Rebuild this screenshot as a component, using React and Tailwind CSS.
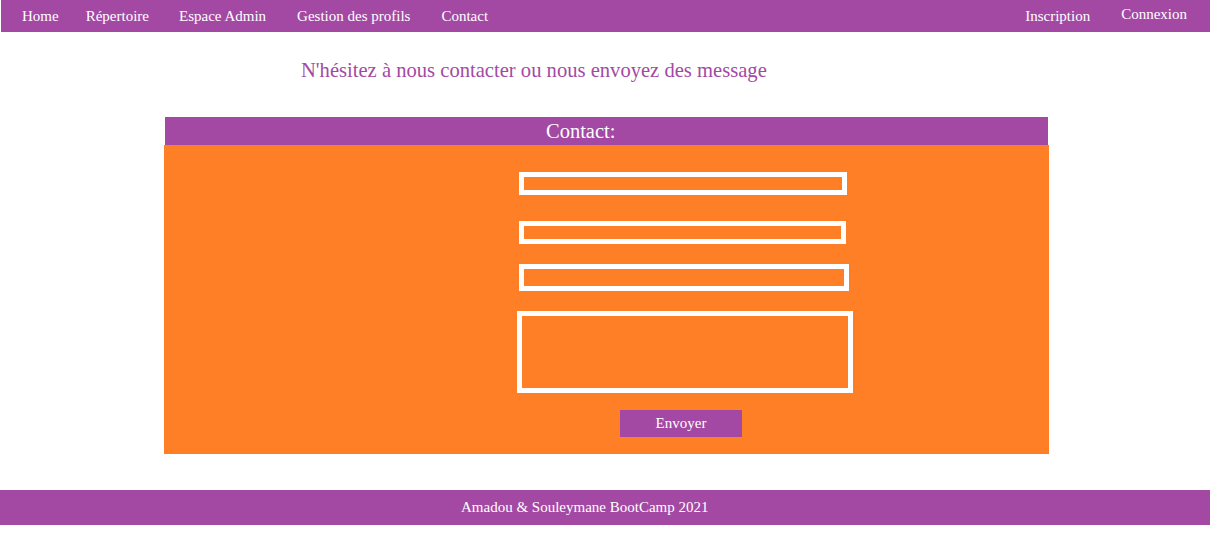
import React from 'react';

const navLeft = [
  { label: 'Home', cls: 'ml-[21px]' },
  { label: 'Répertoire', cls: 'ml-[27px]' },
  { label: 'Espace Admin', cls: 'ml-[30px]' },
  { label: 'Gestion des profils', cls: 'ml-[31px]' },
  { label: 'Contact', cls: 'ml-[31px]' },
];

const App = () => {
  return (
    <div className="min-h-[554px] bg-white font-['Liberation_Serif',serif] text-white">
      {/* Top navigation */}
      <nav className="ml-px h-[32px] bg-[#a349a4] flex items-center justify-between text-[15px]">
        <ul className="flex items-center">
          {navLeft.map(item => (
            <li key={item.label} className={item.cls}>{item.label}</li>
          ))}
        </ul>
        <ul className="flex items-center">
          <li>Inscription</li>
          <li className="ml-[31px] mr-[23px] mb-[3px]">Connexion</li>
        </ul>
      </nav>

      {/* Intro */}
      <h1 className="mt-[24px] ml-[301px] text-[20.6px] leading-[28px] text-[#a349a4]">
        N'hésitez à nous contacter ou nous envoyez des message
      </h1>

      {/* Contact panel */}
      <section className="mt-[33px] ml-[164px] w-[885px]">
        <div className="mx-px h-[28px] bg-[#a349a4] pl-[381px] text-[20.5px] leading-[28px]">
          Contact:
        </div>
        <form className="h-[309px] bg-[#ff7f27] pl-[355px] pt-[27px] flex flex-col items-start">
          <input className="w-[328px] h-[23px] border-[5px] border-white bg-transparent outline-none" />
          <input className="mt-[26px] w-[327px] h-[23px] border-[5px] border-white bg-transparent outline-none" />
          <input className="mt-[20px] w-[330px] h-[27px] border-[5px] border-white bg-transparent outline-none" />
          <textarea className="mt-[20px] -ml-[2px] w-[336px] h-[82px] border-[5px] border-white bg-transparent outline-none resize-none" />
          <button type="button" className="mt-[17px] ml-[101px] w-[122px] h-[27px] bg-[#a349a4] text-[15px] text-white">
            Envoyer
          </button>
        </form>
      </section>

      {/* Footer */}
      <footer className="mt-[36px] h-[35px] bg-[#a349a4] flex items-center text-[15px]">
        <p className="ml-[461px]">Amadou &amp; Souleymane BootCamp 2021</p>
      </footer>
    </div>
  );
};

export default App;
